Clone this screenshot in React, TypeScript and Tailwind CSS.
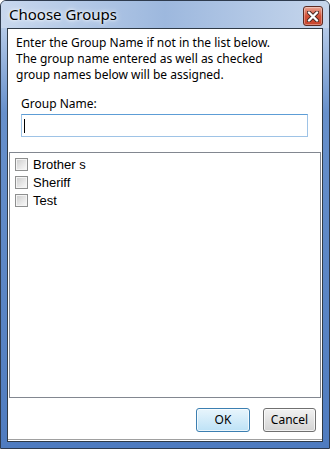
import React from "react";

const groups = ["Brother s", "Sheriff", "Test"];

const Checkbox = () => (
  <div className="w-[13px] h-[13px] border border-[#8e8f8f] bg-[#f4f4f4] p-[1px]">
    <div className="w-full h-full bg-gradient-to-br from-[#cfcfcf] via-[#e4e4e4] to-[#f7f7f7]" />
  </div>
);

export default function App() {
  return (
    <div className="w-[330px] h-[449px] flex flex-col border border-[#2e3b4e] rounded-t-[6px] overflow-hidden bg-gradient-to-b from-[#b9cde9] from-[5%] via-[#6790cb] via-[25%] to-[#4f7cc0] font-['Noto_Sans',sans-serif]">
      {/* title bar */}
      <div className="h-[27px] shrink-0 flex items-start justify-between pl-[8px] pr-[6px] bg-gradient-to-r from-[#c8d8ee] via-[#9db8de] to-[#c6d6ec]">
        <span className="mt-[4px] text-[15px] leading-[18px] text-black [text-shadow:0_0_6px_#ffffff,0_0_3px_#ffffff]">
          Choose Groups
        </span>
        <div className="mt-[5px] w-[20px] h-[20px] rounded-[3px] border border-[#5c2a22] bg-gradient-to-b from-[#e8a493] via-[#d24f36] to-[#c7452d] flex items-center justify-center shadow-[inset_0_0_0_1px_rgba(255,255,255,0.35)]">
          <svg width="12" height="11" viewBox="0 0 12 11">
            <path
              d="M2 1.5 L10 9.5 M10 1.5 L2 9.5"
              stroke="#4a2a25"
              strokeWidth="4.2"
              strokeLinecap="round"
            />
            <path
              d="M2 1.5 L10 9.5 M10 1.5 L2 9.5"
              stroke="#ffffff"
              strokeWidth="2.4"
              strokeLinecap="round"
            />
          </svg>
        </div>
      </div>

      {/* client area */}
      <div className="mx-[6px] mb-[6px] flex-1 flex flex-col border border-[#2f3a46] bg-white">
        <div className="pt-[6px] pl-[8px] text-[12px] leading-[16px] text-black">
          <p>Enter the Group Name if not in the list below.</p>
          <p>The group name entered as well as checked</p>
          <p>group names below will be assigned.</p>
        </div>
        <div className="pl-[13px] pr-[14px] mt-[13px] text-[12px] leading-[15px] text-black">
          <p>Group Name:</p>
          <div className="mt-[3px] h-[23px] border border-[#9ec3e6] border-t-[#5d9dd6] flex items-center pl-[2px]">
            <div className="w-[1px] h-[14px] bg-black" />
          </div>
        </div>

        {/* list */}
        <div className="mx-[1px] mt-[15px] h-[246px] border border-[#828790] pt-[5px] pl-[5px] flex flex-col gap-[5px] font-['Liberation_Sans',Arial,sans-serif] text-[13px] leading-[13px] text-black">
          {groups.map((g) => (
            <div key={g} className="flex items-center gap-[5px]">
              <Checkbox />
              <span>{g}</span>
            </div>
          ))}
        </div>

        <div className="flex-1 flex justify-end items-start gap-[13px] pt-[10px] pr-[6px] border-b border-[#a0a0a0] mb-[1px] text-[12px]">
          <button className="w-[54px] h-[24px] rounded-[3px] border border-[#3c7fb1] bg-gradient-to-b from-[#e8f5fc] to-[#bde2f6] shadow-[inset_0_0_0_1px_rgba(255,255,255,0.7)] text-black">
            OK
          </button>
          <button className="w-[53px] h-[24px] rounded-[3px] border border-[#707070] bg-gradient-to-b from-[#f2f2f2] to-[#d3d3d3] shadow-[inset_0_0_0_1px_rgba(255,255,255,0.7)] text-black">
            Cancel
          </button>
        </div>
      </div>
    </div>
  );
}
